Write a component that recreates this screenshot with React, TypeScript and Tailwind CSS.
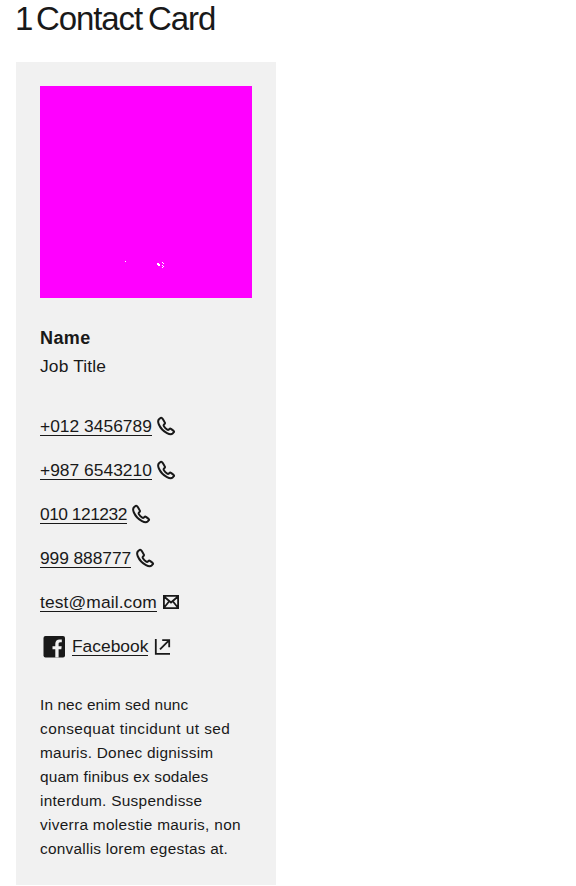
import React from "react";

function PhoneIcon() {
  return (
    <svg className="ml-1 size-5 shrink-0" viewBox="0 0 20 20" fill="none" stroke="#191919" strokeWidth="2" strokeLinejoin="round">
      <path d="M4.2 2.2 3 3.2C1.8 4.5 2 6.5 2.9 8.5c1.5 3.5 4.5 6.7 8.1 8.6 2.1 1.1 4.4 1.5 5.6.4l1.1-1.1c.5-.5.4-1-.1-1.5l-2.6-2c-.6-.5-1-.4-1.5 0l-.8.8c-.5.4-1.1.2-1.7-.3-1.3-.9-2.3-2-3.1-3.2-.4-.6-.4-1.1 0-1.6l.8-.8c.4-.5.4-1 0-1.6L6.8 3.1C6 2 5.2 1.4 4.2 2.2Z" />
    </svg>
  );
}

const phones = [
  { text: "+012 3456789", cls: "w-28 tracking-[0.02px]" },
  { text: "+987 6543210", cls: "w-28 tracking-[0.02px]" },
  { text: "010 121232", cls: "w-[87px] tracking-[-0.5px]" },
  { text: "999 888777", cls: "w-[91px] tracking-[-0.08px]" },
];

const bio = [
  { text: "In nec enim sed nunc", cls: "tracking-[0.1px]" },
  { text: "consequat tincidunt ut sed", cls: "tracking-[0.44px]" },
  { text: "mauris. Donec dignissim", cls: "tracking-[0.25px]" },
  { text: "quam finibus ex sodales", cls: "tracking-[0.14px]" },
  { text: "interdum. Suspendisse", cls: "tracking-[0.28px]" },
  { text: "viverra molestie mauris, non", cls: "tracking-[0.3px]" },
  { text: "convallis lorem egestas at.", cls: "tracking-[0.25px]" },
];

const link = "block h-5 whitespace-nowrap border-b border-[#191919] text-[17.4px] leading-5";

export default function App() {
  return (
    <main className="h-[886px] w-full overflow-hidden bg-white px-4 font-['Liberation_Sans',Arial,sans-serif] text-[#191919]">
      <h1 className="h-[62px] whitespace-nowrap text-[33px] leading-[38px] tracking-[-1.1px] [word-spacing:-2px]">
        <span className="-ml-px tracking-[-3.5px]">1</span> Contact Card
      </h1>
      <section className="h-[823px] w-[260px] bg-[#f1f1f1] p-6">
        <svg className="block size-[212px] bg-[#ff00ff]" viewBox="0 0 212 212" fill="#fff" shapeRendering="crispEdges">
          <path d="M85 175h1v1h-1zM117 177h2v1h1v2h-2v-1h-1zM122 176h1v1h-1zM123 177h1v1h-1zM122 179h1v1h-1zM123 180h1v1h-1zM122 181h1v1h-1z" />
        </svg>
        <h2 className="mt-7 text-[18px] leading-6 font-bold tracking-[0.4px]">Name</h2>
        <p className="mt-1 text-[17.4px] leading-6 tracking-[0.15px]">Job Title</p>
        <ul className="mt-[38px]">
          {phones.map((p) => (
            <li key={p.text} className="mb-6 flex h-5 items-center">
              <a className={`${link} ${p.cls}`}>{p.text}</a>
              <PhoneIcon />
            </li>
          ))}
          <li className="mb-6 flex h-5 items-center">
            <a className={`${link} w-[117px] tracking-[0.12px]`}>test@mail.com</a>
            <svg className="ml-1 size-5" viewBox="0 0 20 20" fill="none" stroke="#191919" strokeWidth="1.8">
              <path d="M2.9 3.9h14.2v12.2H2.9zM3 4.5l7 6 7-6M3 15.7l4.8-6M17 15.7l-4.8-6" />
            </svg>
          </li>
          <li className="flex h-5 items-center">
            <svg className="mr-1 ml-0.5 h-6 w-[26px] shrink-0" viewBox="0 0 26 24">
              <rect x="1.5" y="2" width="21.5" height="21.6" rx="2" fill="#191919" />
              <path d="M13.3 23.6v-8.3h-2.8v-3h2.8V9.8c0-2.9 1.8-4.3 4.2-4.3l2.3.1v2.7h-1.5c-1.4 0-1.7.8-1.7 1.8v2.2h3.1l-.4 3h-2.7v8.3z" fill="#f1f1f1" />
            </svg>
            <a className={`${link} w-[76px]`}>Facebook</a>
            <svg className="ml-1 size-5" viewBox="0 0 20 20" fill="none" stroke="#191919" strokeWidth="1.8">
              <path d="M3.8 3v14.8H18M8 13.4l8.7-8.7M10.2 4.2h7v7" />
            </svg>
          </li>
        </ul>
        <p className="mt-[37px] text-[15.4px] leading-6">
          {bio.map((l) => (
            <span key={l.text} className={`block whitespace-nowrap ${l.cls}`}>{l.text}</span>
          ))}
        </p>
      </section>
    </main>
  );
}
